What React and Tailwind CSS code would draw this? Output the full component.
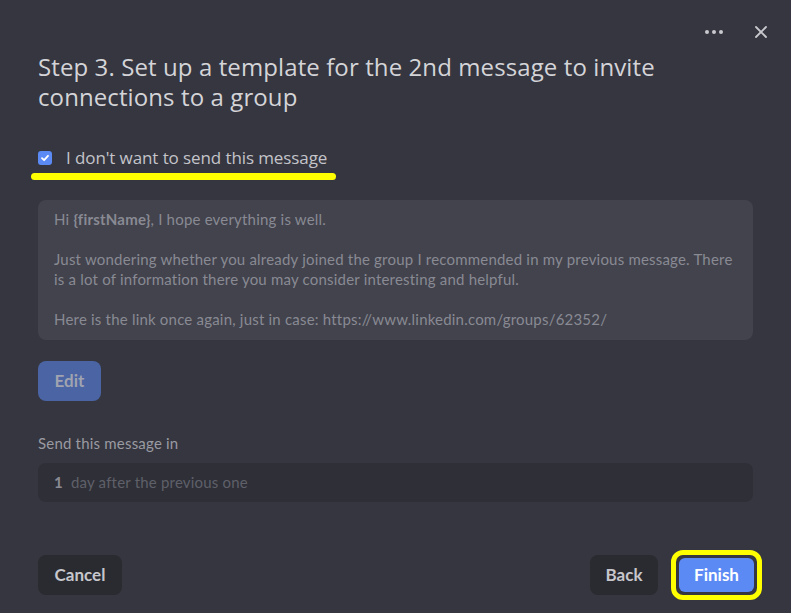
import { X } from 'lucide-react';

export default function App() {
  return (
    <div className="w-[791px] h-[613px] bg-[#35363f] flex flex-col px-[38px] overflow-hidden" style={{ fontFamily: '"Open Sans", sans-serif' }}>
      {/* Top actions */}
      <div className="flex justify-end items-center gap-[28px] h-[20px] mt-[22px] -mr-[18px]">
        <div className="flex gap-[3px] items-center">
          <span className="w-[4px] h-[4px] rounded-full bg-[#c8c8ce]" />
          <span className="w-[4px] h-[4px] rounded-full bg-[#c8c8ce]" />
          <span className="w-[4px] h-[4px] rounded-full bg-[#c8c8ce]" />
        </div>
        <X size={20} strokeWidth={2.2} className="text-[#c8c8ce]" />
      </div>

      <h1 className="text-[24px] leading-[30px] text-[#d4d4d8] mt-[10px] tracking-[0.1px]">
        Step 3. Set up a template for the 2nd message to invite connections to a group
      </h1>

      {/* Checkbox */}
      <div className="mt-[33px] flex flex-col items-start -ml-[7px]">
        <label className="flex items-center gap-[14px] pl-[7px]">
          <span className="w-[14px] h-[14px] rounded-[3px] bg-[#5b8af5] flex items-center justify-center">
            <svg width="10" height="10" viewBox="0 0 10 10" fill="none">
              <path d="M2 5.2 L4.1 7.2 L8 2.8" stroke="white" strokeWidth="1.8" strokeLinecap="round" strokeLinejoin="round" />
            </svg>
          </span>
          <span className="text-[17px] text-[#c4c4ca] tracking-[-0.1px]">I don't want to send this message</span>
        </label>
        <div className="w-[305px] h-[7px] rounded-full bg-[#ffff00] mt-[2px]" />
      </div>

      {/* Message preview */}
      <div className="mt-[20px] bg-[#42434d] rounded-[8px] pl-[16px] pr-[10px] pt-[9px] pb-[11px] text-[15px] leading-[20px] tracking-[0.2px] text-[#898a93]" style={{ fontFamily: 'Lato, sans-serif' }}>
        <p>Hi <span className="font-bold">{'{firstName}'}</span>, I hope everything is well.</p>
        <p className="mt-[20px]">Just wondering whether you already joined the group I recommended in my previous message. There is a lot of information there you may consider interesting and helpful.</p>
        <p className="mt-[20px]">Here is the link once again, just in case: https://www.linkedin.com/groups/62352/</p>
      </div>

      <button className="mt-[21px] self-start w-[63px] h-[40px] rounded-[8px] bg-[#4a64a4] text-[17px] font-bold text-[#a0a3b0]" style={{ fontFamily: 'Lato, sans-serif' }}>
        Edit
      </button>

      <p className="mt-[31px] text-[15px] tracking-[0.2px] text-[#9a9aa2]" style={{ fontFamily: 'Lato, sans-serif' }}>Send this message in</p>

      <div className="mt-[9px] h-[39px] rounded-[8px] bg-[#2e2f37] flex items-center px-[16px] gap-[8px] text-[15px] tracking-[0.2px]" style={{ fontFamily: 'Lato, sans-serif' }}>
        <span className="text-[#8a8a92] font-bold">1</span>
        <span className="text-[#5f6069]">day after the previous one</span>
      </div>

      {/* Footer */}
      <div className="mt-auto mb-[13px] flex items-center justify-between" style={{ fontFamily: 'Lato, sans-serif' }}>
        <button className="w-[84px] h-[40px] rounded-[8px] bg-[#2a2b30] text-[17px] font-bold text-[#c6c6cc]">Cancel</button>
        <div className="flex items-center gap-[13px] -mr-[9px]">
          <button className="w-[68px] h-[40px] rounded-[8px] bg-[#2a2b30] text-[17px] font-bold text-[#c6c6cc]">Back</button>
          <div className="rounded-[12px] border-[5px] border-[#ffff00] p-[3px]">
            <button className="w-[75px] h-[34px] rounded-[6px] bg-[#5b8af5] text-[17px] font-bold text-white">Finish</button>
          </div>
        </div>
      </div>
    </div>
  );
}
